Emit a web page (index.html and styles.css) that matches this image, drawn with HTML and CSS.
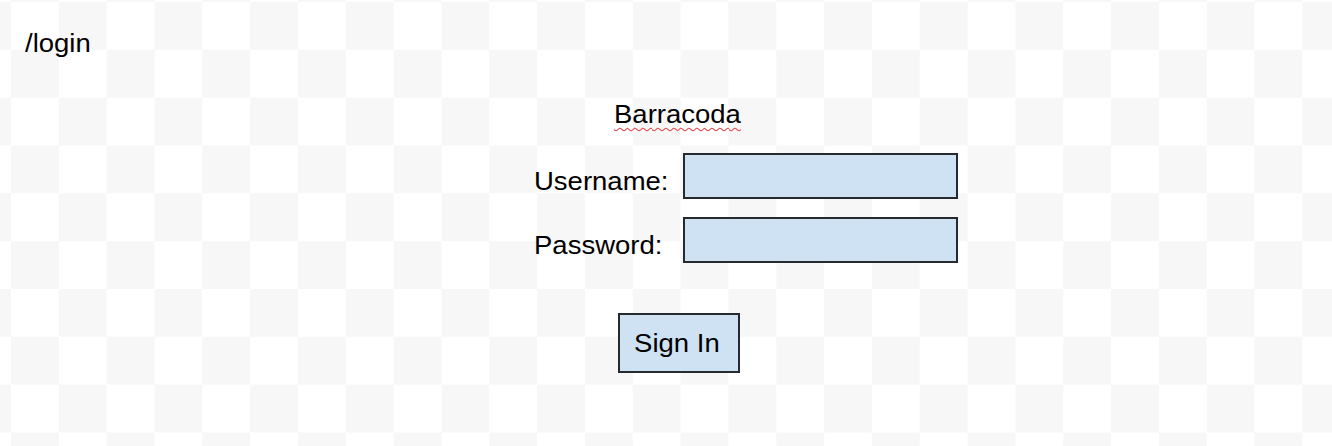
FILE: index.html
```html
<!DOCTYPE html>
<html lang="en">
<head>
<meta charset="utf-8">
<title>/login</title>
<link rel="stylesheet" href="styles.css">
</head>
<body>
<div class="route"><span class="stretch">/login</span></div>
<main class="login">
  <div class="title"><span class="stretch brand">Barracoda</span></div>
  <div class="field">
    <label class="label" for="user"><span class="stretch">Username:</span></label>
    <input class="box" id="user" type="text">
  </div>
  <div class="field">
    <label class="label" for="pass"><span class="stretch">Password:</span></label>
    <input class="box" id="pass" type="password">
  </div>
  <div class="actions">
    <button class="btn" type="button"><span class="stretch center">Sign In</span></button>
  </div>
</main>
</body>
</html>
```
FILE: styles.css
```css
html, body {
  margin: 0;
  padding: 0;
}
body {
  width: 1332px;
  height: 446px;
  overflow: hidden;
  font-family: "Liberation Sans", Arial, sans-serif;
  font-size: 25px;
  line-height: 28px;
  color: #000;
  background-color: #fff;
  background-image: repeating-conic-gradient(#f7f7f7 0 25%, #ffffff 0 50%);
  background-size: 95.67px 95.67px;
  background-position: 11px 2px;
}
.stretch {
  display: inline-block;
  transform: scaleX(1.1);
  transform-origin: left center;
  white-space: nowrap;
}
.stretch.center {
  transform-origin: center center;
}
.route {
  padding: 29px 0 0 25px;
  height: 28px;
}
.login {
  margin: 43px 0 0 533px;
  width: 425px;
  display: flex;
  flex-direction: column;
}
.title {
  padding-left: 81px;
  height: 28px;
}
.brand {
  text-decoration: underline wavy #e8454a;
  text-decoration-thickness: 1px;
  text-underline-offset: 4px;
}
.field {
  display: flex;
  align-items: center;
  margin-top: 25px;
}
.field + .field {
  margin-top: 18px;
}
.label {
  width: 150px;
  padding-top: 9px;
  padding-left: 1px;
  box-sizing: border-box;
}
.box {
  width: 275px;
  height: 46px;
  box-sizing: border-box;
  margin: 0;
  padding: 0;
  border: 2px solid #262a2f;
  background: #cfe2f3;
  outline: none;
}
.actions {
  margin-top: 50px;
  padding-left: 85px;
}
.btn {
  width: 122px;
  height: 60px;
  box-sizing: border-box;
  margin: 0;
  padding: 0 4px 0 0;
  border: 2px solid #262a2f;
  background: #cfe2f3;
  font-family: inherit;
  font-size: 25px;
  line-height: 28px;
  color: #000;
  cursor: pointer;
}
```
